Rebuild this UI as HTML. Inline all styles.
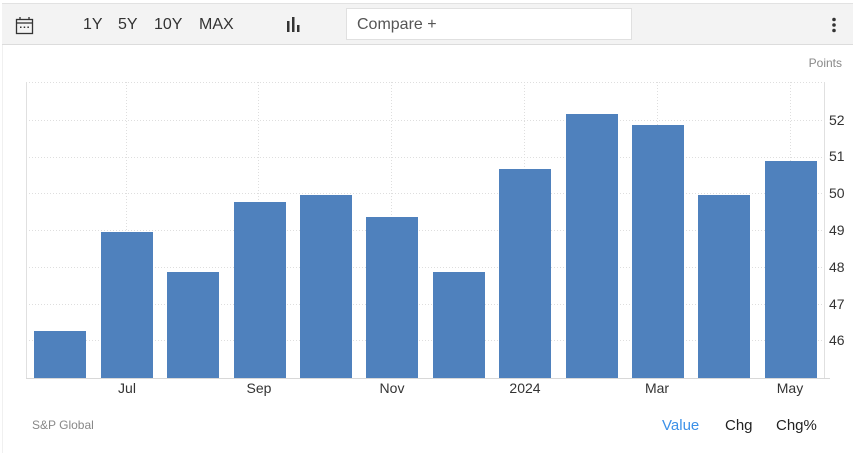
<!DOCTYPE html>
<html><head><meta charset="utf-8"><style>
html,body{margin:0;padding:0;background:#fff;}
body{width:855px;height:453px;position:relative;overflow:hidden;font-family:"Liberation Sans",Arial,sans-serif;}
.tb{position:absolute;left:2px;top:3px;width:851px;height:40px;background:#f3f3f3;border-top:1px solid #e2e2e2;border-bottom:1px solid #dcdcdc;}
.tb span{position:absolute;top:12px;font-size:16px;color:#333;}
.cmp{position:absolute;left:344px;top:4px;width:286px;height:32px;background:#fff;border:1px solid #e0e0e0;box-sizing:border-box;font-size:16px;color:#555;padding:7px 10px;}
.lb{position:absolute;left:2px;top:44px;width:1px;height:409px;background:#f0f0f0;}
</style></head><body>
<div class="lb"></div>
<div class="tb">
<svg style="position:absolute;left:13px;top:12px" width="20" height="20" viewBox="0 0 20 20"><rect x="1.5" y="3.5" width="16" height="14" fill="none" stroke="#333" stroke-width="1.3"/><line x1="1.5" y1="7" x2="17.5" y2="7" stroke="#333" stroke-width="1.3"/><line x1="5" y1="1" x2="5" y2="4" stroke="#333" stroke-width="1.3"/><line x1="14" y1="1" x2="14" y2="4" stroke="#333" stroke-width="1.3"/><rect x="5" y="10.5" width="1.5" height="1.5" fill="#333"/><rect x="8.7" y="10.5" width="1.5" height="1.5" fill="#333"/><rect x="12.4" y="10.5" width="1.5" height="1.5" fill="#333"/></svg>
<span style="left:81px">1Y</span><span style="left:116px">5Y</span><span style="left:152px">10Y</span><span style="left:197px">MAX</span>
<svg style="position:absolute;left:284px;top:13px" width="16" height="16"><rect x="1" y="4" width="2.5" height="11" fill="#333"/><rect x="6" y="0" width="2.5" height="15" fill="#333"/><rect x="11" y="8" width="2.5" height="7" fill="#333"/></svg>
<div class="cmp">Compare +</div>
<svg style="position:absolute;left:829px;top:13px" width="6" height="16"><circle cx="3" cy="2.5" r="1.8" fill="#333"/><circle cx="3" cy="8" r="1.8" fill="#333"/><circle cx="3" cy="13.5" r="1.8" fill="#333"/></svg>
</div>
<svg style="position:absolute;left:0;top:0" width="855" height="453" font-family="Liberation Sans, Arial, sans-serif">
<text x="842" y="67" font-size="12" fill="#888" text-anchor="end">Points</text>
<g stroke="#dedede" stroke-dasharray="1,2" stroke-width="1">
<line x1="26" y1="82.5" x2="824" y2="82.5"/><line x1="26" y1="120.5" x2="824" y2="120.5"/><line x1="26" y1="157.5" x2="824" y2="157.5"/><line x1="26" y1="193.5" x2="824" y2="193.5"/><line x1="26" y1="230.5" x2="824" y2="230.5"/><line x1="26" y1="267.5" x2="824" y2="267.5"/><line x1="26" y1="304.5" x2="824" y2="304.5"/><line x1="26" y1="340.5" x2="824" y2="340.5"/>
<line x1="126.5" y1="82" x2="126.5" y2="378"/><line x1="258.5" y1="82" x2="258.5" y2="378"/><line x1="391.5" y1="82" x2="391.5" y2="378"/><line x1="524.5" y1="82" x2="524.5" y2="378"/><line x1="657.5" y1="82" x2="657.5" y2="378"/><line x1="790.5" y1="82" x2="790.5" y2="378"/>
</g>
<line x1="26.5" y1="82" x2="26.5" y2="378" stroke="#e0e0e0"/>
<line x1="824.5" y1="82" x2="824.5" y2="378" stroke="#e0e0e0"/>
<line x1="26" y1="378.5" x2="830" y2="378.5" stroke="#d8d8d8"/>
<g fill="#4f81bd">
<rect x="34" y="331" width="52" height="47"/><rect x="101" y="232" width="52" height="146"/><rect x="167" y="272" width="52" height="106"/><rect x="234" y="202" width="52" height="176"/><rect x="300" y="195" width="52" height="183"/><rect x="366" y="217" width="52" height="161"/><rect x="433" y="272" width="52" height="106"/><rect x="499" y="169" width="52" height="209"/><rect x="566" y="114" width="52" height="264"/><rect x="632" y="125" width="52" height="253"/><rect x="698" y="195" width="52" height="183"/><rect x="765" y="161" width="52" height="217"/>
</g>
<g font-size="14" fill="#333">
<text x="829" y="125">52</text><text x="829" y="161">51</text><text x="829" y="198">50</text><text x="829" y="235">49</text><text x="829" y="272">48</text><text x="829" y="309">47</text><text x="829" y="345">46</text>
</g>
<g font-size="14" fill="#333" text-anchor="middle">
<text x="127" y="393">Jul</text><text x="259" y="393">Sep</text><text x="392" y="393">Nov</text><text x="525" y="393">2024</text><text x="657" y="393">Mar</text><text x="790" y="393">May</text>
</g>
<text x="32" y="429" font-size="12" fill="#888">S&amp;P Global</text>
<text x="662" y="430" font-size="15" fill="#3b90e8">Value</text>
<text x="725" y="430" font-size="15" fill="#222">Chg</text>
<text x="776" y="430" font-size="15" fill="#222">Chg%</text>
</svg>
</body></html>
